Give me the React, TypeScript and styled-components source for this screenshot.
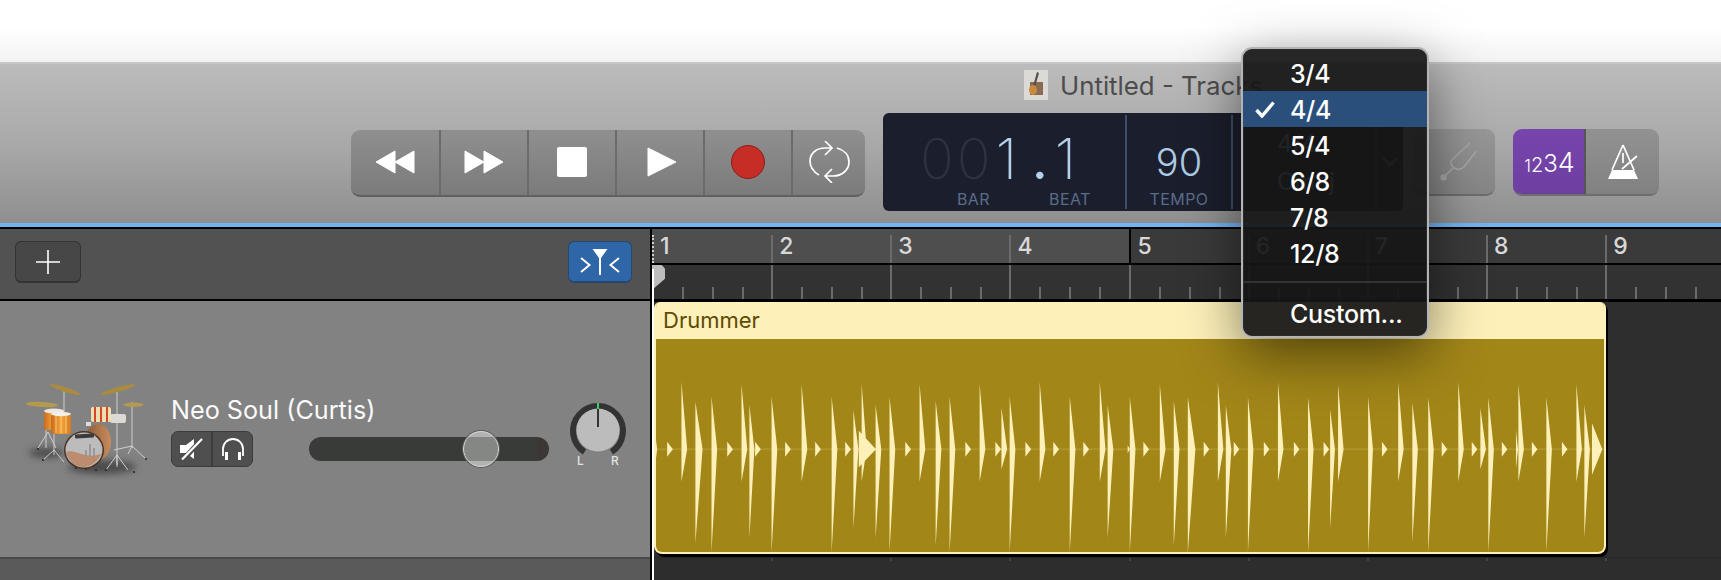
import styled, { createGlobalStyle } from "styled-components";

const GlobalStyle = createGlobalStyle`
    html, body {
        margin: 0;
        padding: 0;
        background: #2e2e2e;
    }
    * {
        box-sizing: border-box;
    }
`;

const BAR = 119.15;
const BARS = [1, 2, 3, 4, 5, 6, 7, 8, 9];
const METERS = ["3/4", "4/4", "5/4", "6/8", "7/8", "12/8"];

// spikes read off the region: x, top, bottom, width (page pixels)
const z4 = (x: number, top: number, bottom: number, w = 16) => [640 + x / 2.8, 360 + top / 3, 360 + bottom / 3, w / 2.8];
const z5 = (x: number, top: number, bottom: number, w = 16) => [1180 + x / 2.898, 360 + top / 3, 360 + bottom / 3, w / 2.898];

const SPIKES = [
    z4(42, 215, 320, 6), z4(76, 245, 290), z4(116, 65, 365), z4(155, 125, 550, 20), z4(200, 110, 578), z4(244, 245, 290),
    z4(284, 72, 365), z4(306, 135, 535, 14), z4(322, 245, 290), z4(368, 110, 578), z4(406, 245, 290), z4(452, 72, 365),
    z4(490, 245, 290), z4(536, 110, 578), z4(574, 245, 290), z4(597, 150, 505, 14), z4(620, 72, 365, 14), z4(612, 212, 322, 48),
    z4(659, 135, 535), z4(698, 112, 575), z4(742, 245, 290), z4(782, 72, 365), z4(827, 122, 558), z4(866, 112, 578),
    z4(910, 245, 290), z4(950, 72, 365), z4(994, 245, 290), z4(1011, 143, 328), z4(1034, 110, 578), z4(1078, 245, 290),
    z4(1118, 65, 365), z4(1156, 245, 290), z4(1202, 110, 578), z4(1240, 245, 290), z4(1286, 65, 365), z4(1308, 135, 535),
    z4(1364, 255, 280, 6), z4(1370, 110, 578), z4(1408, 245, 290), z4(1454, 72, 365), z4(1493, 122, 558),
    z5(21, 112, 578, 22), z5(67, 245, 290), z5(108, 65, 365), z5(131, 135, 535), z5(154, 245, 290), z5(195, 110, 578),
    z5(241, 245, 290), z5(282, 65, 365), z5(328, 245, 290), z5(369, 112, 578), z5(414, 245, 290), z5(433, 148, 505, 14),
    z5(456, 72, 365), z5(543, 110, 578, 14), z5(583, 245, 290), z5(630, 65, 365), z5(671, 128, 548), z5(717, 112, 578),
    z5(756, 245, 290), z5(804, 65, 365), z5(843, 245, 290), z5(868, 143, 328), z5(891, 112, 578), z5(930, 245, 290),
    z5(971, 210, 325, 6), z5(978, 72, 365), z5(1017, 245, 290), z5(1059, 112, 578), z5(1104, 245, 290), z5(1146, 72, 365),
    z5(1169, 135, 535), z5(1191, 190, 345, 30),
];
const CENTER = 449.3;
const wavePath = SPIKES.map(([x, top, bottom, w]) => `M${x} ${top}L${x + w} ${CENTER}L${x} ${bottom}Z`).join("");

const RewindIcon = () => (
    <svg width="40" height="24" viewBox="0 0 40 24">
        <path d="M1 12 20 1V23ZM20 12 39 1V23Z" fill="#fff" stroke="#fff" strokeLinejoin="round" />
    </svg>
);
const ForwardIcon = () => (
    <svg width="40" height="24" viewBox="0 0 40 24">
        <path d="M1 1 20 12 1 23ZM20 1 39 12 20 23Z" fill="#fff" stroke="#fff" strokeLinejoin="round" />
    </svg>
);
const PlayIcon = () => (
    <svg width="30" height="30" viewBox="0 0 30 30">
        <path d="M1 1 29 15 1 29Z" fill="#fff" stroke="#fff" strokeLinejoin="round" />
    </svg>
);
const LoopIcon = () => (
    <svg width="41" height="42" viewBox="0 0 41 42" fill="none" stroke="#fff" strokeWidth="1.7">
        <path d="M10 34C3 30 1 25 1 20 1 12 8 7 16 7H23M16 0 23 7 16 14" />
        <path d="M28 7C35 9 40 14 40 21 40 29 33 35 24 35H16M23 28 16 35 23 42" />
    </svg>
);
const PlusIcon = () => (
    <svg width="24" height="24" viewBox="0 0 24 24" stroke="#fff" strokeWidth="1.6">
        <path d="M12 0V24M0 12H24" />
    </svg>
);
const FunnelIcon = () => (
    <svg width="40" height="28" viewBox="0 0 40 28" fill="none" stroke="#fff" strokeWidth="2">
        <path d="M12.5 1H27.5L21 10H19Z" fill="#fff" stroke="none" />
        <path d="M20 8V27M1 10 9.5 17 1 24M39 10 30.5 17 39 24" />
    </svg>
);
const ForkIcon = () => (
    <svg width="38" height="40" viewBox="0 0 42 44" fill="none" stroke="#a6a6a6" strokeWidth="1.8">
        <circle cx="4" cy="39" r="3.5" fill="#a6a6a6" stroke="none" />
        <path d="M4 39 15 28C10 24 12 20 15 18L33 1" />
        <path d="M15 28C20 32 24 30 27 27L40 10" />
    </svg>
);
const MetronomeIcon = () => (
    <svg width="30" height="35" viewBox="0 0 30 35" fill="none" stroke="#fff" strokeWidth="1.7">
        <path d="M4 26H26L30 35H0Z" fill="#fff" stroke="none" />
        <path d="M15 1 4 26M15 1 26 26M15 9V19M14 25 29 12" />
    </svg>
);
const MuteIcon = () => (
    <svg width="23" height="22" viewBox="0 0 23 22">
        <path d="M0 7H6L14 1V21L6 15H0Z" fill="#fff" />
        <path d="M2 23 23 0" stroke="#4f4f4f" strokeWidth="5" />
        <path d="M2 21.5 22 1" stroke="#fff" strokeWidth="2.2" />
    </svg>
);
const HeadphonesIcon = () => (
    <svg width="24" height="24" viewBox="0 0 24 24" fill="none" stroke="#fff" strokeWidth="1.8">
        <path d="M2 19V12A10 10 0 0 1 22 12V19" />
        <path d="M4 15H7V23H4ZM17 15H20V23H17Z" fill="#fff" stroke="none" />
    </svg>
);
const CheckIcon = () => (
    <svg width="20" height="17" viewBox="0 0 20 17" fill="none" stroke="#fff" strokeWidth="3.4">
        <path d="M1.5 9 7 15 18.5 1.5" />
    </svg>
);
const ChevronIcon = () => (
    <svg width="16" height="10" viewBox="0 0 16 10" fill="none" stroke="#8b93a6" strokeWidth="2">
        <path d="M1 1 8 8 15 1" />
    </svg>
);
const DocIcon = () => (
    <svg width="24" height="30" viewBox="0 0 24 30">
        <rect width="24" height="30" fill="#dcdad6" />
        <rect x="6" y="12" width="13" height="13" fill="#8a6a50" />
        <path d="M13 2 15 3 11 17 9 16Z" fill="#54504c" />
        <ellipse cx="9" cy="20" rx="4" ry="5" fill="#c98a3e" />
    </svg>
);
const PanKnob = () => (
    <svg width="60" height="68" viewBox="0 0 60 68">
        <path d="M16.5 52A25 25 0 1 1 43.5 52" fill="none" stroke="#333" strokeWidth="6" />
        <circle cx="30" cy="30" r="21.5" fill="#bcbcbc" />
        <path d="M30 3V9" stroke="#3fce6a" strokeWidth="2" />
        <path d="M30 9V27" stroke="#333" strokeWidth="2" />
        <text x="12.5" y="65" fontFamily="Inter, sans-serif" fontSize="12" fontWeight="500" fill="#e2e2e2" textAnchor="middle">L</text>
        <text x="47" y="65" fontFamily="Inter, sans-serif" fontSize="12" fontWeight="500" fill="#e2e2e2" textAnchor="middle">R</text>
    </svg>
);
const DrumKit = () => (
    <svg width="150" height="110" viewBox="0 0 150 110">
        <defs>
            <filter id="soft" x="-30%" y="-60%" width="160%" height="220%"><feGaussianBlur stdDeviation="3.5" /></filter>
            <filter id="photo"><feGaussianBlur stdDeviation="0.35" /></filter>
            <linearGradient id="orange" x1="0" x2="1" y1="0" y2="0">
                <stop offset="0" stopColor="#c96a1e" />
                <stop offset="0.5" stopColor="#f3a63c" />
                <stop offset="1" stopColor="#d67a22" />
            </linearGradient>
            <linearGradient id="shell" x1="0" x2="1" y1="0" y2="0">
                <stop offset="0" stopColor="#8c5a38" />
                <stop offset="1" stopColor="#c88c5c" />
            </linearGradient>
        </defs>
        <ellipse cx="36" cy="83" rx="17" ry="5" fill="#4c4c4c" filter="url(#soft)" />
        <ellipse cx="92" cy="97" rx="34" ry="7" fill="#4c4c4c" filter="url(#soft)" />
        <g filter="url(#photo)">
            <g stroke="#d6d6d6" strokeWidth="0.9" fill="none">
                <path d="M54 20V60M107 20V95M122 32V78" />
                <path d="M36 60V78M44 62V85M38 62 28 78M38 62 46 78M44 80 33 90M44 80 54 92" />
                <path d="M107 85 96 100M107 85 118 100M107 85 107 97M122 76 104 80M122 76 136 89M122 76 118 84" />
            </g>
            <g fill="#222">
                <circle cx="28" cy="79" r="1" /><circle cx="33" cy="90" r="1" /><circle cx="96" cy="100" r="1" />
                <circle cx="124" cy="102" r="1" /><circle cx="136" cy="89" r="1" /><circle cx="86" cy="100" r="1" />
                <circle cx="66" cy="98" r="0.9" /><circle cx="76" cy="99" r="0.9" />
            </g>
            <ellipse cx="55" cy="19.5" rx="16" ry="2.4" fill="#ab8b3c" transform="rotate(18 55 19.5)" />
            <ellipse cx="108" cy="19.5" rx="18" ry="2.4" fill="#ab8b3c" transform="rotate(-15 108 19.5)" />
            <ellipse cx="32" cy="34.5" rx="16" ry="2.6" fill="#b49a50" transform="rotate(3 32 34.5)" />
            <ellipse cx="123.5" cy="34.7" rx="10" ry="2.2" fill="#b49a50" />
            <rect x="34" y="41" width="18" height="19" rx="2" fill="url(#orange)" />
            <rect x="41" y="44" width="20" height="20" rx="2" fill="url(#orange)" />
            <path d="M46 45V63M51 45V63M56 45V63" stroke="#ffc877" strokeWidth="1" />
            <ellipse cx="44" cy="41" rx="10" ry="2.6" fill="#ece8e0" />
            <ellipse cx="51" cy="44" rx="10" ry="2.2" fill="#f2efe8" />
            <rect x="100" y="44" width="16" height="9" rx="2" fill="#dcdad4" />
            <rect x="81" y="37" width="20" height="15" rx="2" fill="#f0ddb0" />
            <path d="M85 37V52M91 37V52M97 37V52" stroke="#d2492a" strokeWidth="2" />
            <ellipse cx="88" cy="72" rx="13" ry="18" fill="url(#shell)" />
            <ellipse cx="74" cy="80" rx="20" ry="19" fill="#4a3226" />
            <ellipse cx="74" cy="80" rx="18.5" ry="17.5" fill="#bcbcbc" />
            <path d="M56 82C66 78 74 90 91 84 87 93 80 97 73 97 65 97 59 91 56 82Z" fill="#bb8c6e" />
            <path d="M80 74V86M84 78V86M76 80V86" stroke="#8f8f8f" strokeWidth="1.6" />
            <rect x="65" y="64" width="19" height="4" rx="1" fill="#3a3a3a" transform="rotate(-3 75 66)" />
            <rect x="76" y="52" width="5" height="4" fill="#ddd" />
        </g>
    </svg>
);

const App = () => {
    return (
        <>
            <GlobalStyle />
            <Page>
                <TopBar />
                <Toolbar>
                    <TitleRow>
                        <DocIcon />
                        <Title>Untitled - Tracks</Title>
                    </TitleRow>
                    <Controls>
                        <Transport>
                            <TransportButton><RewindIcon /></TransportButton>
                            <TransportButton><ForwardIcon /></TransportButton>
                            <TransportButton><StopSquare /></TransportButton>
                            <TransportButton><PlayIcon /></TransportButton>
                            <TransportButton><RecordDot /></TransportButton>
                            <TransportButton><LoopIcon /></TransportButton>
                        </Transport>
                        <Lcd>
                            <PositionCell>
                                <PositionValue>
                                    <GhostDigits>00</GhostDigits>
                                    <BarDigit>1</BarDigit>
                                    <Dot>.</Dot>
                                    <BarDigit>1</BarDigit>
                                </PositionValue>
                                <PositionLabels>
                                    <LcdLabel>BAR</LcdLabel>
                                    <LcdLabel>BEAT</LcdLabel>
                                </PositionLabels>
                            </PositionCell>
                            <TempoCell>
                                <TempoValue>90</TempoValue>
                                <LcdLabel>TEMPO</LcdLabel>
                            </TempoCell>
                            <SignatureCell>
                                <SignatureText>4/4</SignatureText>
                                <SignatureText>Cmaj</SignatureText>
                            </SignatureCell>
                            <ChevronCell><ChevronIcon /></ChevronCell>
                        </Lcd>
                        <TunerButton><ForkIcon /></TunerButton>
                        <CountGroup>
                            <CountIn>
                                <CountDigit $size={17}>1</CountDigit>
                                <CountDigit $size={20}>2</CountDigit>
                                <CountDigit $size={24}>3</CountDigit>
                                <CountDigit $size={27}>4</CountDigit>
                            </CountIn>
                            <MetronomeButton><MetronomeIcon /></MetronomeButton>
                        </CountGroup>
                    </Controls>
                </Toolbar>
                <BlueLine />
                <Workspace>
                    <LeftColumn>
                        <TracksHeader>
                            <AddButton><PlusIcon /></AddButton>
                            <FilterButton><FunnelIcon /></FilterButton>
                        </TracksHeader>
                        <TrackHeader>
                            <DrumKit />
                            <TrackInfo>
                                <TrackName>Neo Soul (Curtis)</TrackName>
                                <TrackControls>
                                    <ToggleGroup>
                                        <Toggle><MuteIcon /></Toggle>
                                        <Toggle><HeadphonesIcon /></Toggle>
                                    </ToggleGroup>
                                    <Fader>
                                        <FaderThumb />
                                    </Fader>
                                </TrackControls>
                            </TrackInfo>
                            <KnobSlot><PanKnob /></KnobSlot>
                        </TrackHeader>
                        <TrackFooter />
                    </LeftColumn>
                    <RightColumn>
                        <RulerTop>
                            <CycleGroup>
                                {BARS.slice(0, 4).map((n) => (
                                    <BarCell key={n} $first={n === 1}>{n}</BarCell>
                                ))}
                            </CycleGroup>
                            {BARS.slice(4).map((n) => (
                                <BarCell key={n} $noLine={n === 5}>{n}</BarCell>
                            ))}
                        </RulerTop>
                        <RulerBottom>
                            {BARS.map((n) => (
                                <TickCell key={n}>
                                    <Tick /><Tick /><Tick />
                                </TickCell>
                            ))}
                        </RulerBottom>
                        <TrackLane>
                            <Region>
                                <RegionName>Drummer</RegionName>
                                <RegionBody>
                                    <svg width="100%" height="100%" viewBox="656 339 947 213" preserveAspectRatio="none">
                                        <path d={`M656 ${CENTER}H1603`} stroke="#ae9328" strokeWidth="2" />
                                        <path d={wavePath} fill="#fdf0b9" />
                                    </svg>
                                </RegionBody>
                            </Region>
                        </TrackLane>
                        <LaneFooter>
                            {BARS.slice(1).map((n) => (
                                <FooterTick key={n} />
                            ))}
                        </LaneFooter>
                    </RightColumn>
                    <Playhead>
                        <PlayheadCap />
                        <PlayheadLine />
                    </Playhead>
                </Workspace>
                <Menu>
                    {METERS.map((m) => (
                        <MenuItem key={m} $active={m === "4/4"}>
                            <CheckSlot>{m === "4/4" && <CheckIcon />}</CheckSlot>
                            {m}
                        </MenuItem>
                    ))}
                    <MenuSeparator />
                    <MenuItem>
                        <CheckSlot />
                        Custom...
                    </MenuItem>
                </Menu>
            </Page>
        </>
    );
};
export default App;

const Page = styled.div`
    position: relative;
    width: 1721px;
    height: 580px;
    overflow: hidden;
    font-family: Inter, "Liberation Sans", sans-serif;
`;
const TopBar = styled.div`
    height: 64px;
    background: linear-gradient(180deg, #ffffff 0, #ffffff 28px, #f2f2f2 61px);
    border-bottom: 2px solid #c6c6c6;
`;
const Toolbar = styled.div`
    height: 159px;
    padding-top: 6px;
    background: linear-gradient(180deg, #bcbcbc 0%, #a9a9a9 50%, #8f8f8f 100%);
`;
const TitleRow = styled.div`
    display: flex;
    align-items: center;
    gap: 12px;
    height: 29px;
    padding-left: 1024px;
`;
const Title = styled.span`
    padding-top: 2px;
    font-size: 25.8px;
    color: #4c4c4c;
    white-space: nowrap;
`;
const Controls = styled.div`
    display: flex;
    align-items: center;
    height: 98px;
    margin-top: 14px;
    padding-left: 351px;
`;
const Transport = styled.div`
    display: flex;
    width: 514px;
    height: 67px;
    margin-top: 2px;
    border-radius: 9px;
    overflow: hidden;
    background: linear-gradient(180deg, #8f8f8f, #7b7b7b);
    border-bottom: 2px solid #5f5f5f;
`;
const TransportButton = styled.div`
    flex: 0 0 88px;
    display: flex;
    align-items: center;
    justify-content: center;
    border-right: 2px solid #6b6b6b;
    &:first-child {
        flex-basis: 90px;
    }
    &:nth-child(4) {
        padding-left: 4px;
    }
    &:last-child {
        flex: 1;
        border-right: 0;
    }
`;
const StopSquare = styled.div`
    width: 30px;
    height: 30px;
    border-radius: 2px;
    background: #fff;
`;
const RecordDot = styled.div`
    width: 34px;
    height: 34px;
    border-radius: 50%;
    background: #c52e26;
    border: 1px solid #8c1f1a;
`;
const Lcd = styled.div`
    display: flex;
    width: 520px;
    height: 98px;
    margin-left: 18px;
    padding: 2px 0;
    border-radius: 6px;
    background: #1b1e2c;
`;
const PositionCell = styled.div`
    flex: 0 0 244px;
    display: flex;
    flex-direction: column;
    border-right: 2px solid #3f4e68;
`;
const PositionValue = styled.div`
    display: flex;
    align-items: baseline;
    height: 64px;
    padding: 24px 0 0 37px;
    font-size: 56px;
    font-weight: 200;
    line-height: 40px;
    color: #b4d0ea;
`;
const GhostDigits = styled.span`
    color: #2d3142;
    letter-spacing: 3px;
    margin-right: 2px;
`;
const BarDigit = styled.span`
    width: 30px;
    font-weight: 250;
`;
const Dot = styled.span`
    width: 29px;
    padding-left: 6px;
    font-weight: 400;
`;
const PositionLabels = styled.div`
    display: flex;
    gap: 59px;
    padding: 12px 0 0 74px;
`;
const LcdLabel = styled.span`
    font-size: 16px;
    line-height: 16px;
    letter-spacing: 0.4px;
    color: #5a6d89;
`;
const TempoCell = styled.div`
    flex: 0 0 106px;
    display: flex;
    flex-direction: column;
    align-items: center;
    border-right: 2px solid #3f4e68;
`;
const TempoValue = styled.div`
    height: 76px;
    padding-top: 25px;
    font-size: 38px;
    font-weight: 300;
    line-height: 44px;
    color: #aecbe6;
`;
const SignatureCell = styled.div`
    flex: 0 0 144px;
    display: flex;
    flex-direction: column;
    gap: 8px;
    padding: 14px 0 0 44px;
    border-right: 2px solid #3f4e68;
`;
const SignatureText = styled.span`
    font-size: 24px;
    line-height: 30px;
    color: #aecbe6;
`;
const ChevronCell = styled.div`
    flex: 1;
    display: flex;
    align-items: center;
    justify-content: center;
`;
const TunerButton = styled.div`
    display: flex;
    align-items: center;
    justify-content: flex-end;
    width: 82px;
    height: 67px;
    margin: 1px 0 0 10px;
    padding-right: 17px;
    border-radius: 9px;
    background: linear-gradient(180deg, #979797, #858585);
    border-bottom: 2px solid #6d6d6d;
`;
const CountGroup = styled.div`
    display: flex;
    width: 146px;
    height: 67px;
    margin: 1px 0 0 18px;
    border-radius: 9px;
    overflow: hidden;
    border-bottom: 2px solid #6d6d6d;
`;
const CountIn = styled.div`
    flex: 0 0 73px;
    display: flex;
    align-items: baseline;
    justify-content: center;
    padding: 18px 0 0 2px;
    background: linear-gradient(180deg, #7745ad, #6d3fa0);
    border-right: 2px solid #555;
    color: #fff;
`;
const CountDigit = styled.span<{ $size: number }>`
    font-size: ${(p) => p.$size}px;
    font-weight: 300;
    line-height: 32px;
`;
const MetronomeButton = styled.div`
    flex: 1;
    display: flex;
    align-items: center;
    justify-content: center;
    background: linear-gradient(180deg, #929292, #818181);
`;
const BlueLine = styled.div`
    height: 4px;
    background: #72b3f4;
`;
const Workspace = styled.div`
    position: relative;
    display: flex;
    height: 353px;
    border-top: 2px solid #000;
`;
const LeftColumn = styled.div`
    flex: 0 0 652px;
    display: flex;
    flex-direction: column;
    border-right: 2px solid #000;
`;
const TracksHeader = styled.div`
    flex: 0 0 72px;
    display: flex;
    justify-content: space-between;
    padding: 12px 18px 0 15px;
    background: #525252;
    border-bottom: 2px solid #000;
`;
const AddButton = styled.div`
    display: flex;
    align-items: center;
    justify-content: center;
    width: 66px;
    height: 42px;
    border-radius: 6px;
    background: #474747;
    border: 1px solid #333;
    border-bottom-width: 2px;
`;
const FilterButton = styled(AddButton)`
    width: 64px;
    background: #2e66a8;
    border-color: #27476e;
`;
const TrackHeader = styled.div`
    flex: 0 0 256px;
    display: flex;
    padding: 69px 0 0 10px;
    background: #828282;
`;
const TrackInfo = styled.div`
    display: flex;
    flex-direction: column;
    margin-left: 11px;
    padding-top: 25px;
`;
const TrackName = styled.div`
    height: 30px;
    font-size: 25.2px;
    line-height: 30px;
    color: #fafafa;
    white-space: nowrap;
`;
const TrackControls = styled.div`
    display: flex;
    align-items: center;
    gap: 56px;
    margin-top: 6px;
`;
const ToggleGroup = styled.div`
    display: flex;
    width: 82px;
    height: 36px;
    border-radius: 7px;
    overflow: hidden;
    background: #4f4f4f;
    border: 1px solid #3c3c3c;
`;
const Toggle = styled.div`
    flex: 1;
    display: flex;
    align-items: center;
    justify-content: center;
    &:first-child {
        border-right: 2px solid #3c3c3c;
    }
`;
const Fader = styled.div`
    position: relative;
    width: 240px;
    height: 24px;
    border-radius: 12px;
    background: linear-gradient(90deg, #383b38 95%, #3c3733 95%);
`;
const FaderThumb = styled.div`
    position: absolute;
    left: 154px;
    top: -6px;
    width: 36px;
    height: 36px;
    border-radius: 50%;
    background: linear-gradient(180deg, #b2b2b2 0 16%, #858785 16% 84%, #b2b2b2 84%);
    border: 1.5px solid #dadada;
    box-shadow: 0 0 0 1px #5a5a5a;
`;
const KnobSlot = styled.div`
    margin: 30px 0 0 19px;
`;
const TrackFooter = styled.div`
    flex: 1;
    background: #5a5a5a;
    border-top: 2px solid #4a4a4a;
`;
const RightColumn = styled.div`
    flex: 1;
    min-width: 0;
    display: flex;
    flex-direction: column;
    background: #2e2e2e;
`;
const RulerTop = styled.div`
    flex: 0 0 36px;
    display: flex;
    background: #3a3a3a;
    border-bottom: 2px solid #000;
`;
const CycleGroup = styled.div`
    display: flex;
    flex: 0 0 ${BAR * 4 + 2}px;
    background: #4e4e4e;
    border-right: 2px solid #000;
`;
const BarCell = styled.div<{ $first?: boolean; $noLine?: boolean }>`
    flex: 0 0 ${(p) => (p.$noLine ? BAR - 2 : BAR)}px;
    height: 28px;
    margin-top: 6px;
    padding-left: ${(p) => (p.$noLine ? 5 : 6)}px;
    border-left: 2px ${(p) => (p.$first ? "dotted #d0d0d0" : p.$noLine ? "solid transparent" : "solid #6b6b6b")};
    font-size: 23px;
    font-weight: 500;
    line-height: 22px;
    color: #d8d8d8;
`;
const RulerBottom = styled.div`
    flex: 0 0 37px;
    display: flex;
    background: #323232;
    border-bottom: 3px solid #000;
`;
const TickCell = styled.div`
    flex: 0 0 ${BAR}px;
    display: flex;
    align-items: flex-end;
    gap: 28px;
    padding-left: 28px;
    border-left: 2px solid #6b6b6b;
    &:first-child {
        border-left-color: transparent;
    }
`;
const Tick = styled.div`
    width: 2px;
    height: 12px;
    background: #6b6b6b;
`;
const TrackLane = styled.div`
    flex: 0 0 255px;
    padding-left: 2px;
`;
const Region = styled.div`
    display: flex;
    flex-direction: column;
    width: 952px;
    height: 252px;
    border: 2px solid #fdf0b9;
    border-top: 0;
    border-radius: 6px 6px 8px 8px;
    overflow: hidden;
    background: #a28618;
    box-shadow: 2px 3px 0 #000;
`;
const RegionName = styled.div`
    flex: 0 0 37px;
    padding-left: 7px;
    background: #fdf0b9;
    font-size: 22px;
    line-height: 37px;
    color: #5e4a05;
`;
const RegionBody = styled.div`
    flex: 1;
    min-height: 0;
    & > svg {
        display: block;
    }
`;
const LaneFooter = styled.div`
    flex: 1;
    display: flex;
    align-items: flex-start;
    gap: ${BAR - 2}px;
    padding-left: ${BAR}px;
    background: #2d2d2d;
    border-top: 1px solid #262626;
`;
const FooterTick = styled.div`
    width: 2px;
    height: 3px;
    background: #444;
`;
const Playhead = styled.div`
    position: absolute;
    left: 652px;
    top: 36px;
    bottom: 0;
    width: 14px;
`;
const PlayheadCap = styled.div`
    width: 13px;
    height: 25px;
    background: #bdbdbd;
    clip-path: polygon(0 0, 75% 0, 100% 15%, 100% 55%, 0 100%);
`;
const PlayheadLine = styled.div`
    position: absolute;
    top: 4px;
    bottom: 0;
    left: 0;
    width: 2px;
    background: #fff;
`;
const Menu = styled.div`
    position: absolute;
    left: 1241px;
    top: 47px;
    width: 188px;
    height: 291px;
    padding: 6px 0 0;
    border-radius: 11px;
    overflow: hidden;
    background: rgba(22, 22, 22, 0.93);
    border: 2px solid #b4b4b4;
    box-shadow: inset 0 0 0 1px #2a2a2a, 0 16px 55px rgba(0, 0, 0, 0.5);
`;
const MenuItem = styled.div<{ $active?: boolean }>`
    display: flex;
    align-items: center;
    height: 36px;
    padding: 1px 0 0 12px;
    background: ${(p) => (p.$active ? "#2a4f7a" : "transparent")};
    font-size: 25px;
    font-weight: 500;
    letter-spacing: -0.3px;
    color: #fff;
    white-space: nowrap;
`;
const CheckSlot = styled.span`
    display: flex;
    flex: 0 0 35px;
`;
const MenuSeparator = styled.div`
    height: 2px;
    margin: 10px 0 12px;
    background: #333;
`;
